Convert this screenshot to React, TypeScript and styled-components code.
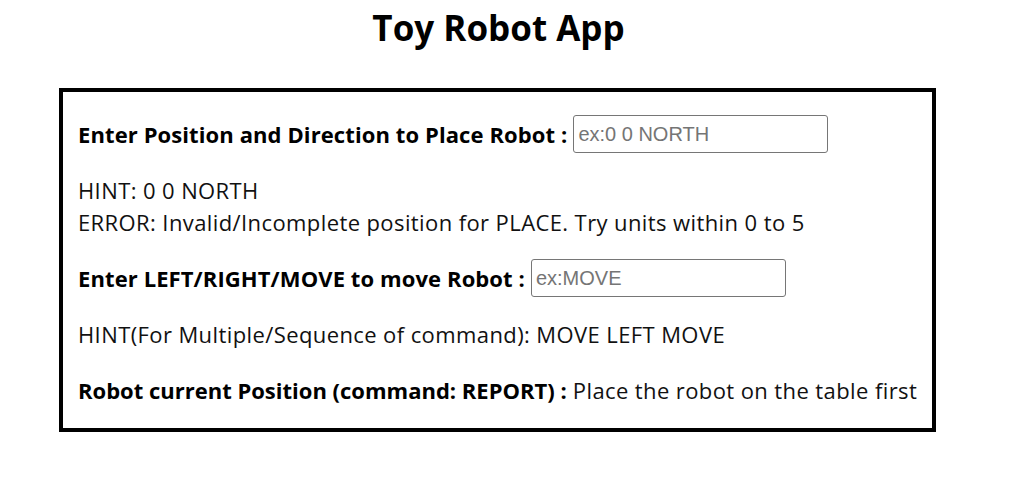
import React from "react";
import styled, { createGlobalStyle } from "styled-components";

const Global = createGlobalStyle`
  html, body { margin: 0; padding: 0; background: #fff; }
  body { font-family: "Open Sans", "Noto Sans", sans-serif; color: #111; }
`;

const Page = styled.div`
  width: 997px;
  display: flex;
  flex-direction: column;
  align-items: center;
`;

const Title = styled.h1`
  margin: 6px 0 38px;
  font-size: 35px;
  line-height: 44px;
  font-weight: 700;
  color: #000;
`;

const Panel = styled.div`
  box-sizing: border-box;
  width: 877px;
  margin-left: -2px;
  border: 4px solid #000;
  padding: 23px 14px 22px 15px;
  display: flex;
  flex-direction: column;
`;

const Row = styled.div<{ $gap?: number }>`
  display: flex;
  align-items: center;
  height: 38px;
  margin-top: ${(p) => p.$gap ?? 0}px;
`;

const Label = styled.span`
  font-size: 22px;
  font-weight: 700;
  letter-spacing: 0.1px;
  color: #000;
  margin-right: 6px;
  white-space: nowrap;
`;

const Input = styled.input`
  box-sizing: border-box;
  width: 255px;
  height: 38px;
  border: 1px solid #767676;
  border-radius: 3px;
  padding: 0 4px;
  font-family: "Liberation Sans", Arial, sans-serif;
  font-size: 20px;
  &::placeholder { color: #757575; }
`;

const Text = styled.div<{ $gap?: number }>`
  font-size: 22px;
  line-height: 32px;
  letter-spacing: 0.4px;
  white-space: nowrap;
  margin-top: ${(p) => p.$gap ?? 0}px;
  color: #111;
`;

const Strong = styled.span`
  font-weight: 700;
  letter-spacing: 0;
  color: #000;
`;

export default function App() {
  return (
    <>
      <Global />
      <Page>
        <Title>Toy Robot App</Title>
        <Panel>
          <Row>
            <Label>Enter Position and Direction to Place Robot :</Label>
            <Input placeholder="ex:0 0 NORTH" />
          </Row>
          <Text $gap={21}>HINT: 0 0 NORTH</Text>
          <Text>ERROR: Invalid/Incomplete position for PLACE. Try units within 0 to 5</Text>
          <Row $gap={21}>
            <Label>Enter LEFT/RIGHT/MOVE to move Robot :</Label>
            <Input placeholder="ex:MOVE" />
          </Row>
          <Text $gap={21}>HINT(For Multiple/Sequence of command): MOVE LEFT MOVE</Text>
          <Text $gap={24}>
            <Strong>Robot current Position (command: REPORT) :</Strong> Place the robot on the table first
          </Text>
        </Panel>
      </Page>
    </>
  );
}
